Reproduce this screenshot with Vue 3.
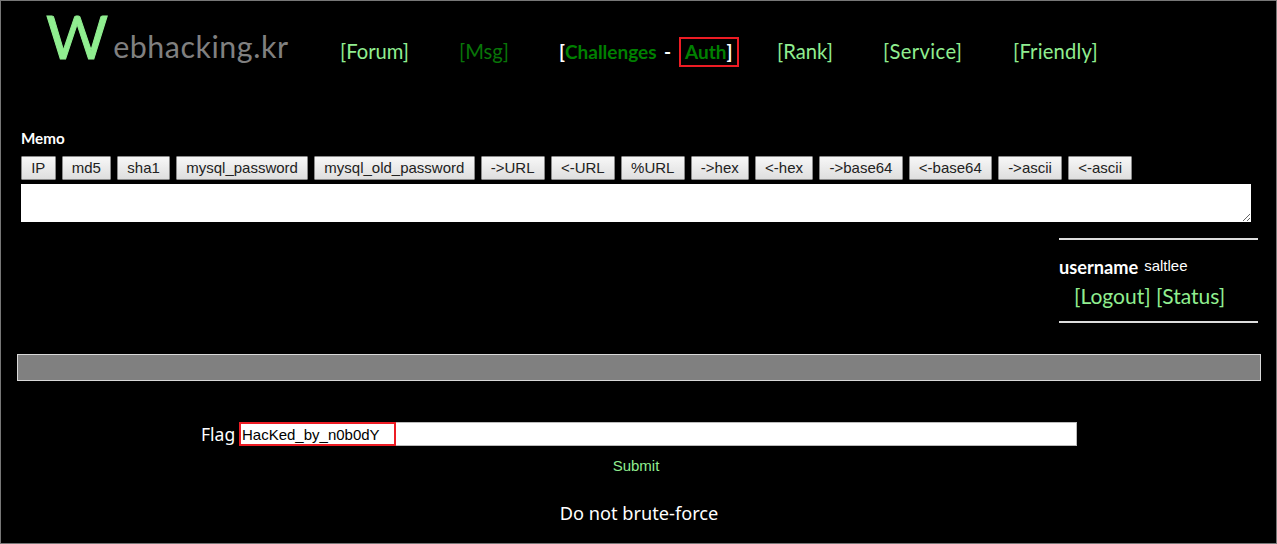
<script setup>
const buttons = ['IP','md5','sha1','mysql_password','mysql_old_password','->URL','<-URL','%URL','->hex','<-hex','->base64','<-base64','->ascii','<-ascii']
</script>

<template>
  <div class="page">
    <header class="top">
      <div class="logo"><span class="w">W</span><span class="rest">ebhacking.kr</span></div>
      <nav class="nav">
        <a class="link forum">[Forum]</a>
        <a class="link msg">[Msg]</a>
        <span class="chall"><b class="br">[</b><b class="dark">Challenges</b><b class="dash">-</b><span class="authbox"><b class="dark">Auth</b><b class="br">]</b></span></span>
        <a class="link rank">[Rank]</a>
        <a class="link service">[Service]</a>
        <a class="link friendly">[Friendly]</a>
      </nav>
    </header>

    <section class="memo">
      <div class="memo-title">Memo</div>
      <div class="tools">
        <button v-for="b in buttons" :key="b" class="tool" type="button">{{ b }}</button>
      </div>
      <textarea class="area"></textarea>
    </section>

    <aside class="user">
      <div class="uname"><b>username</b><span class="who">saltlee</span></div>
      <div class="ulinks"><a class="link">[Logout]</a> <a class="link">[Status]</a></div>
    </aside>

    <div class="bar"></div>

    <form class="flag" @submit.prevent>
      <div class="flag-row">
        <label class="flag-label">Flag</label>
        <div class="input-wrap">
          <input class="flag-input" value="HacKed_by_n0b0dY" />
          <span class="mark"></span>
        </div>
      </div>
      <div class="submit">Submit</div>
      <div class="note">Do not brute-force</div>
    </form>
  </div>
</template>

<style>
html, body { margin: 0; background: #000; }
</style>

<style scoped>
.page {
  box-sizing: border-box;
  width: 1277px;
  height: 544px;
  border: 1px solid #777;
  background: #000;
  overflow: hidden;
  font-family: "Lato", "Noto Sans", sans-serif;
}
.top { display: flex; align-items: flex-start; height: 128px; }
.logo { margin: 0 0 0 45px; width: 294px; height: 70px; white-space: nowrap; line-height: 70px; }
.w { font-size: 60px; color: #90ee90; -webkit-text-stroke: 1px #90ee90; }
.rest { font-size: 30.4px; color: #808080; margin-left: 5px; letter-spacing: 0.55px; position: relative; top: -1px; }
.nav { display: flex; align-items: center; margin-top: 36px; height: 28px; font-size: 20.2px; white-space: nowrap; }
.link { color: #90ee90; }
.nav .link { display: block; text-align: center; }
.forum { width: 68px; margin-right: 51px; }
.nav .msg { width: 49px; margin-right: 51px; color: #087508; }
.chall { display: flex; align-items: center; width: 180px; margin-right: 38px; color: #fff; font-size: 19px; }
.br { color: #fff; }
.dark { color: #008000; }
.dash { width: 22px; text-align: center; color: #fff; }
.authbox { box-sizing: border-box; width: 60px; height: 30px; margin-top: 2px; border: 2px solid #ed1c24; display: flex; align-items: center; justify-content: flex-end; padding: 0 4px 2px 0; }
.nav .rank { width: 54px; margin-right: 52px; }
.nav .service { width: 79px; margin-right: 51px; letter-spacing: 0.4px; }
.nav .friendly { width: 84px; letter-spacing: 0.2px; }

.memo { margin-left: 20px; }
.memo-title { color: #fff; font-weight: 700; font-size: 15.2px; line-height: 18px; height: 27px; margin-top: 0; }
.tools { display: flex; gap: 6px; height: 24px; margin-bottom: 4px; }
.tool {
  height: 24px;
  padding: 0 9.2px 1px;
  font: 15px "Liberation Sans", Arial, sans-serif;
  color: #222;
  background: linear-gradient(#f7f7f7, #dedede);
  border: 1px solid #8a8a8a;
  border-radius: 1px;
  white-space: nowrap;
}
.area {
  display: block;
  box-sizing: border-box;
  width: 1230px;
  height: 38px;
  border: 0;
  margin: 0;
  background: #fff;
  padding: 0;
}

.user {
  box-sizing: border-box;
  width: 199px;
  height: 85px;
  margin: 16px 0 0 1058px;
  border-top: 2px solid #ddd;
  border-bottom: 2px solid #ddd;
  color: #fff;
}
.uname { margin-top: 15px; line-height: 24px; height: 24px; font-size: 18.2px; white-space: nowrap; }
.who { font: 15px "Liberation Sans", Arial, sans-serif; margin-left: 6px; position: relative; top: -3px; }
.ulinks { font-size: 21px; line-height: 28px; margin: 3px 0 0 15px; white-space: nowrap; }

.bar {
  box-sizing: border-box;
  width: 1244px;
  height: 27px;
  margin: 31px 0 0 16px;
  background: #808080;
  border: 1px solid #d8d8d8;
}

.flag { text-align: center; }
.flag-row { display: flex; align-items: center; margin: 41px 0 0 197px; height: 24px; }
.flag-label { color: #fff; font-size: 17.5px; font-family: "Noto Sans", sans-serif; width: 42px; text-align: left; margin-left: 3px; margin-right: -3px; }
.input-wrap { position: relative; width: 837px; height: 24px; }
.flag-input {
  box-sizing: border-box;
  display: block;
  width: 100%;
  height: 24px;
  border: 1px solid #bbb;
  padding: 0 1px;
  margin: 0;
  font: 15px "Liberation Sans", Arial, sans-serif;
  color: #000;
  background: #fff;
  outline: none;
}
.mark { position: absolute; left: -1px; top: 0; width: 157px; height: 24px; box-sizing: border-box; border: 2px solid #ed1c24; pointer-events: none; }
.submit { width: 1270px; margin-top: 11px; color: #90ee90; font: 15px/18px "Liberation Sans", Arial, sans-serif; }
.note { width: 1276px; margin-top: 26px; color: #fff; font-size: 18.2px; line-height: 24px; font-family: "Noto Sans", sans-serif; }
</style>
